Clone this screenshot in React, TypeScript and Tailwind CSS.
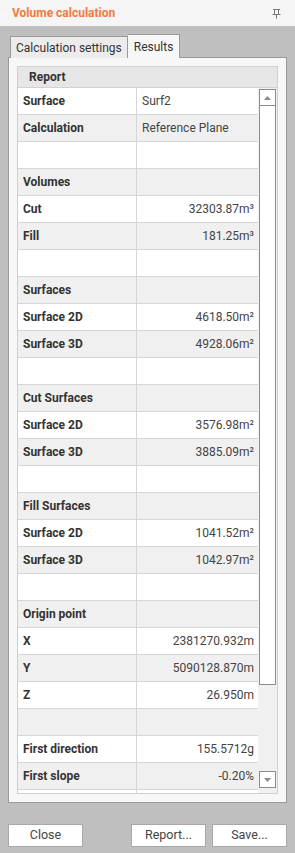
const rows: { label: string; value: string; align?: "left" | "right" }[] = [
  { label: "Surface", value: "Surf2", align: "left" },
  { label: "Calculation", value: "Reference Plane", align: "left" },
  { label: "", value: "" },
  { label: "Volumes", value: "" },
  { label: "Cut", value: "32303.87m³" },
  { label: "Fill", value: "181.25m³" },
  { label: "", value: "" },
  { label: "Surfaces", value: "" },
  { label: "Surface 2D", value: "4618.50m²" },
  { label: "Surface 3D", value: "4928.06m²" },
  { label: "", value: "" },
  { label: "Cut Surfaces", value: "" },
  { label: "Surface 2D", value: "3576.98m²" },
  { label: "Surface 3D", value: "3885.09m²" },
  { label: "", value: "" },
  { label: "Fill Surfaces", value: "" },
  { label: "Surface 2D", value: "1041.52m²" },
  { label: "Surface 3D", value: "1042.97m²" },
  { label: "", value: "" },
  { label: "Origin point", value: "" },
  { label: "X", value: "2381270.932m" },
  { label: "Y", value: "5090128.870m" },
  { label: "Z", value: "26.950m" },
  { label: "", value: "" },
  { label: "First direction", value: "155.5712g" },
  { label: "First slope", value: "-0.20%" },
  // partly scrolled out of view
  { label: "", value: "" },
];

function PinIcon() {
  return (
    <svg width="9" height="11" viewBox="0 0 9 11" fill="none" stroke="#777" strokeWidth="1">
      <path d="M1 1.5h7M2.5 1.5v5M6.5 1.5v5M0.5 6.5h8M4.5 6.5v4" />
    </svg>
  );
}

export default function App() {
  return (
    <div
      className="w-[295px] h-[853px] bg-[#bfbfbf] flex flex-col overflow-hidden text-[12px] text-[#333]"
      style={{ fontFamily: "Roboto, 'Liberation Sans', sans-serif" }}
    >
      <div className="h-[26px] bg-[#f5f5f5] flex items-center justify-between pl-[12px] pr-[14px] shrink-0">
        <span className="text-[#f27a3a] font-bold text-[12px]">Volume calculation</span>
        <PinIcon />
      </div>

      <div className="flex items-end pl-[10px] h-[31px] shrink-0 relative z-10">
        <div className="h-[22px] px-[5px] flex items-center bg-[#ececec] border border-[#9a9a9a] border-b-0 text-[12px] text-[#333] -mb-px">
          Calculation settings
        </div>
        <div className="h-[24px] px-[6px] flex items-center bg-[#f7f7f7] border border-[#9a9a9a] border-b-0 border-l-0 text-[12px] text-[#333] -mb-px">
          Results
        </div>
      </div>

      <div className="mx-[8px] h-[746px] bg-[#f7f7f7] border border-[#9a9a9a] pt-[8px] px-[8px] pb-[8px] shrink-0">
        <div className="h-full border border-[#cfcfcf] bg-[#f0f0f0] flex flex-col overflow-hidden">
          <div className="h-[21px] bg-[#e6e6e6] border-b border-[#d2d2d2] flex items-center pl-[11px] font-bold text-[#333] shrink-0">
            Report
          </div>
          <div className="flex flex-1 overflow-hidden">
            <div className="w-[240px] flex flex-col shrink-0">
              {rows.map((r, i) => (
                <div
                  key={i}
                  className={`h-[27px] shrink-0 flex border-b border-[#d6d6d6] ${i % 2 === 0 ? "bg-white" : "bg-[#f0f0f0]"}`}
                >
                  <div className="w-[119px] border-r border-[#d6d6d6] flex items-center pl-[5px] font-bold text-[#333]">
                    {r.label}
                  </div>
                  <div
                    className={`flex-1 flex items-center px-[4px] text-[#444] ${r.align === "left" ? "justify-start pl-[5px]" : "justify-end"}`}
                  >
                    {r.value}
                  </div>
                </div>
              ))}
            </div>
            <div className="flex-1 flex flex-col items-center pt-[1px] pb-[5px] bg-[#f0f0f0]">
              <div className="w-[17px] h-[17px] border border-[#8c8c8c] bg-white flex items-center justify-center">
                <svg width="7" height="4" viewBox="0 0 7 4">
                  <path d="M0 4L3.5 0L7 4Z" fill="#8a8a8a" />
                </svg>
              </div>
              <div className="w-[17px] h-[579px] border border-[#8c8c8c] border-t-0 bg-white" />
              <div className="flex-1" />
              <div className="w-[17px] h-[17px] border border-[#8c8c8c] bg-white flex items-center justify-center">
                <svg width="7" height="4" viewBox="0 0 7 4">
                  <path d="M0 0L3.5 4L7 0Z" fill="#8a8a8a" />
                </svg>
              </div>
            </div>
          </div>
        </div>
      </div>

      <div className="flex items-start mx-[8px] mt-[21px] h-[23px] shrink-0">
        <button className="w-[75px] h-[23px] bg-white border border-[#a8a8a8] text-[12.5px] text-[#444]">Close</button>
        <div className="flex-1" />
        <button className="w-[75px] h-[23px] bg-white border border-[#a8a8a8] text-[12.5px] text-[#444]">Report...</button>
        <button className="w-[75px] h-[23px] ml-[6px] bg-white border border-[#a8a8a8] text-[12.5px] text-[#444]">Save...</button>
      </div>
    </div>
  );
}
